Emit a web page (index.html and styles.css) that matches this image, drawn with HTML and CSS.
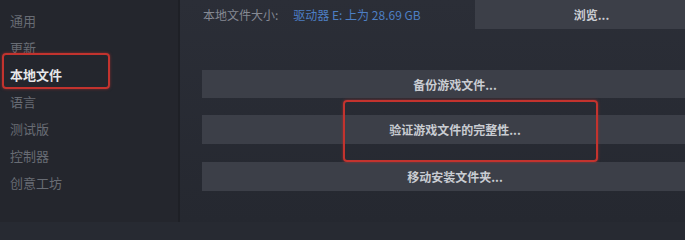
FILE: index.html
```html
<!DOCTYPE html>
<html lang="zh-CN">
<head>
<meta charset="utf-8">
<title>本地文件</title>
<link rel="stylesheet" href="styles.css">
</head>
<body>
<div class="window">
  <nav class="sidebar">
    <div class="nav-item">通用</div>
    <div class="nav-item">更新</div>
    <div class="nav-item active">本地文件</div>
    <div class="nav-item">语言</div>
    <div class="nav-item">测试版</div>
    <div class="nav-item">控制器</div>
    <div class="nav-item">创意工坊</div>
  </nav>
  <main class="main">
    <div class="panel">
      <div class="size-row">
        <span class="label">本地文件大小:</span>
        <span class="link">驱动器 E: 上为 28.69 GB</span>
        <div class="btn browse">浏览...</div>
      </div>
      <div class="btn wide backup">备份游戏文件...</div>
      <div class="btn wide verify">验证游戏文件的完整性...</div>
      <div class="btn wide move">移动安装文件夹...</div>
    </div>
  </main>
  <div class="highlight hl-nav"></div>
  <div class="highlight hl-verify"></div>
</div>
</body>
</html>
```

FILE: styles.css
```css
html, body {
  margin: 0;
  padding: 0;
  width: 685px;
  height: 222px;
  overflow: hidden;
  background: #272a32;
  font-family: "Noto Sans CJK SC", "Noto Sans", sans-serif;
}

.window {
  position: relative;
  display: flex;
  width: 685px;
  height: 222px;
  overflow: hidden;
}

.sidebar {
  flex: none;
  width: 180px;
  background: #24262d;
  border-right: 2px solid #1e2026;
  padding-top: 7px;
  box-sizing: border-box;
}

.nav-item {
  height: 27px;
  line-height: 27px;
  padding-left: 10px;
  font-size: 13px;
  color: #686c74;
}

.nav-item.active {
  color: #e6e7ea;
  font-weight: bold;
}

.main {
  flex: 1;
  background: linear-gradient(#2b2e37, #252830);
  overflow: hidden;
}

.panel {
  width: 506px;
  padding-left: 22px;
}

.size-row {
  display: flex;
  align-items: center;
  height: 29px;
}

.label {
  font-size: 12px;
  color: #858993;
  margin-left: 1px;
}

.link {
  font-size: 12px;
  color: #4d7fc4;
  margin-left: 15px;
}

.btn {
  background: #3c3f48;
  color: #c9ccd2;
  font-size: 12px;
  font-weight: bold;
  display: flex;
  align-items: center;
  justify-content: center;
  height: 29px;
}

.browse {
  margin-left: auto;
  width: 233px;
}

.wide {
  width: 506px;
}

.backup {
  margin-top: 41px;
  height: 28px;
}

.verify {
  margin-top: 17px;
}

.move {
  margin-top: 18px;
}

.highlight {
  position: absolute;
  border: 2px solid #c3332e;
  border-radius: 4px;
  box-shadow: 0 0 3px rgba(200, 50, 45, 0.6);
  box-sizing: border-box;
}

.hl-nav {
  left: 2px;
  top: 53px;
  width: 108px;
  height: 36px;
}

.hl-verify {
  left: 343px;
  top: 100px;
  width: 255px;
  height: 62px;
}
```
